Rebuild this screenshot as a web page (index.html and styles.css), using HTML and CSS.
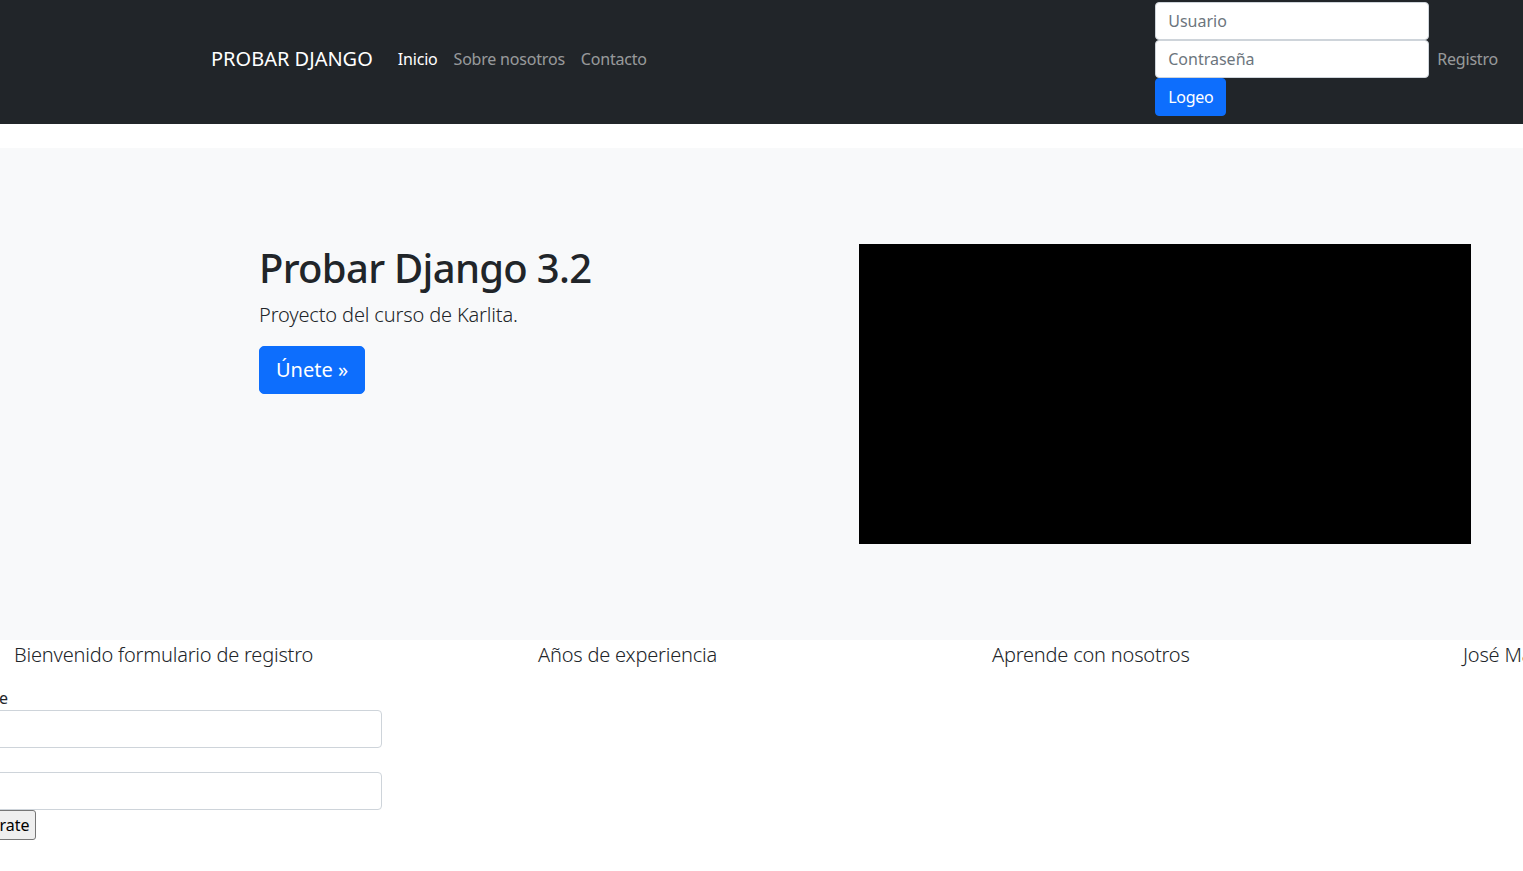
FILE: index.html
```html
<!DOCTYPE html>
<html lang="es">
<head>
<meta charset="utf-8">
<title>Probar Django</title>
<link rel="stylesheet" href="styles.css">
</head>
<body>
<nav class="navbar">
  <a class="brand" href="#">PROBAR DJANGO</a>
  <ul class="nav-links">
    <li><a class="nav-link active" href="#">Inicio</a></li>
    <li><a class="nav-link" href="#">Sobre nosotros</a></li>
    <li><a class="nav-link" href="#">Contacto</a></li>
  </ul>
  <form class="login-form">
    <input class="form-control" type="text" placeholder="Usuario">
    <input class="form-control" type="password" placeholder="Contraseña">
    <button class="btn btn-primary" type="button">Logeo</button>
  </form>
  <a class="nav-link register" href="#">Registro</a>
</nav>

<section class="hero">
  <div class="hero-text">
    <h1>Probar Django 3.2</h1>
    <p class="lead">Proyecto del curso de Karlita.</p>
    <a class="btn btn-primary btn-lg" href="#">Únete »</a>
  </div>
  <div class="video"></div>
</section>

<div class="cols">
  <div class="col col-1">
    <p class="col-title">Bienvenido formulario de registro</p>
    <form class="reg-form">
      <label class="reg-label">Nombre</label>
      <input class="form-control reg-input" type="text">
      <label class="reg-label">Edad</label>
      <input class="form-control reg-input" type="text">
      <button class="plain-btn" type="button">Regístrate</button>
    </form>
  </div>
  <div class="col col-2"><p class="col-title">Años de experiencia</p></div>
  <div class="col col-3"><p class="col-title">Aprende con nosotros</p></div>
  <div class="col col-4"><p class="col-title">José Martínez</p></div>
</div>
</body>
</html>
```

FILE: styles.css
```css
html, body {
  overflow-x: hidden;
}
body {
  margin: 0;
  font-family: "Noto Sans", "Open Sans", sans-serif;
  font-size: 16px;
  line-height: 1.5;
  color: #212529;
  background: #fff;
}
a { text-decoration: none; }

.navbar {
  height: 124px;
  box-sizing: border-box;
  background: #212529;
  display: flex;
  align-items: center;
  padding: 2px 17px 8px 211px;
}
.brand {
  color: #fff;
  font-size: 20px;
  margin-right: 17px;
  line-height: 30px;
}
.nav-links {
  list-style: none;
  margin: 0;
  padding: 0;
  display: flex;
  flex: 1;
}
.nav-link {
  display: block;
  padding: 8px;
  color: rgba(255,255,255,.55);
  line-height: 24px;
  letter-spacing: -0.2px;
}
.nav-link.active { color: #fff; }

.login-form {
  display: flex;
  flex-direction: column;
  align-items: flex-start;
  width: 274px;
}
.form-control {
  box-sizing: border-box;
  height: 38px;
  padding: 6px 12px;
  font: inherit;
  line-height: 24px;
  color: #212529;
  background: #fff;
  border: 1px solid #ced4da;
  border-radius: 4px;
  outline: none;
}
.form-control::placeholder { color: #6c757d; }
.login-form .form-control { width: 274px; }
.btn {
  display: inline-block;
  box-sizing: border-box;
  border: 1px solid transparent;
  border-radius: 4px;
  font: inherit;
  line-height: 24px;
  padding: 6px 12px;
}
.login-form .btn { letter-spacing: -0.3px; }
.btn-primary {
  background: #0d6efd;
  border-color: #0d6efd;
  color: #fff;
}
.btn-lg {
  font-size: 20px;
  line-height: 30px;
  padding: 8px 16px;
  border-radius: 5px;
}

.hero {
  margin-top: 24px;
  height: 492px;
  background: #f8f9fa;
  display: flex;
  align-items: flex-start;
  padding: 96px 52px 0 259px;
  box-sizing: border-box;
}
.hero-text { flex: 1; }
.hero h1 {
  margin: 0 0 8px;
  font-size: 40px;
  font-weight: 500;
  line-height: 48px;
  letter-spacing: -0.7px;
}
.lead {
  font-size: 20px;
  font-weight: 300;
  margin: 0 0 16px;
  line-height: 30px;
  letter-spacing: -0.15px;
}
.video {
  width: 612px;
  height: 300px;
  background: #000;
}

.cols {
  display: flex;
}
.col {
  flex: none;
  box-sizing: border-box;
  padding-left: 14px;
}
.col-1 { width: 524px; }
.col-2 { width: 454px; }
.col-3 { width: 471px; }
.col-4 { width: 300px; }
.col-title {
  margin: 0;
  font-size: 20px;
  font-weight: 300;
  line-height: 30px;
  white-space: nowrap;
  letter-spacing: -0.2px;
}
.reg-form {
  display: flex;
  flex-direction: column;
  align-items: flex-start;
  margin: 16px 0 0 -68px;
  width: 436px;
}
.reg-label {
  line-height: 24px;
  white-space: nowrap;
}
.reg-input { width: 436px; }
.plain-btn {
  font: inherit;
  font-size: 16px;
  padding: 1px 6px;
  line-height: 26px;
  background: #efefef;
  border: 1px solid #767676;
  border-radius: 3px;
  color: #000;
}
```
